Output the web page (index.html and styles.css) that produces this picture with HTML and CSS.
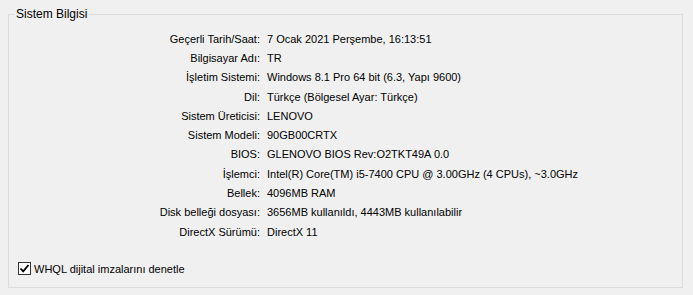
FILE: index.html
```html
<!DOCTYPE html>
<html lang="tr">
<head>
    <meta charset="UTF-8">
    <meta name="viewport" content="width=device-width, initial-scale=1.0">
    <title>Sistem Bilgisi</title>
    <link rel="stylesheet" href="styles.css">
</head>
<body>
    <fieldset class="grup">
        <legend>Sistem Bilgisi</legend>
        <div class="bilgiler">
            <span class="etiket">Geçerli Tarih/Saat:</span><span class="deger">7 Ocak 2021 Perşembe, 16:13:51</span>
            <span class="etiket">Bilgisayar Adı:</span><span class="deger">TR</span>
            <span class="etiket">İşletim Sistemi:</span><span class="deger">Windows 8.1 Pro 64 bit (6.3, Yapı 9600)</span>
            <span class="etiket">Dil:</span><span class="deger">Türkçe (Bölgesel Ayar: Türkçe)</span>
            <span class="etiket">Sistem Üreticisi:</span><span class="deger">LENOVO</span>
            <span class="etiket">Sistem Modeli:</span><span class="deger">90GB00CRTX</span>
            <span class="etiket">BIOS:</span><span class="deger">GLENOVO BIOS Rev:O2TKT49A 0.0</span>
            <span class="etiket">İşlemci:</span><span class="deger">Intel(R) Core(TM) i5-7400 CPU @ 3.00GHz (4 CPUs), ~3.0GHz</span>
            <span class="etiket">Bellek:</span><span class="deger">4096MB RAM</span>
            <span class="etiket">Disk belleği dosyası:</span><span class="deger">3656MB kullanıldı, 4443MB kullanılabilir</span>
            <span class="etiket">DirectX Sürümü:</span><span class="deger">DirectX 11</span>
        </div>
        <label class="secim">
            <span class="kutu">
                <svg width="11" height="11" viewBox="0 0 11 11"><path d="M1.5 5.5 L4.2 8.3 L9.5 2" fill="none" stroke="#000" stroke-width="1.8"/></svg>
            </span>
            WHQL dijital imzalarını denetle
        </label>
    </fieldset>
</body>
</html>
```

FILE: styles.css
```css
body{
    margin: 0;
    background: #f0f0f0;
    font-family: "Liberation Sans", Arial, sans-serif;
    font-size: 11px;
    color: #000;
}
.grup{
    margin: 6px 0 0 8px;
    width: 675px;
    height: 282px;
    box-sizing: border-box;
    border: 1px solid #dcdcdc;
    padding: 7px 0 0 0;
}
.grup legend{
    margin-left: 5px;
    padding: 0 2px;
    line-height: 16px;
    font-size: 12px;
}
.bilgiler{
    display: grid;
    grid-template-columns: 251px auto;
    column-gap: 7px;
    grid-auto-rows: 19.3px;
    align-items: center;
}
.etiket{
    text-align: right;
}
.secim{
    display: flex;
    align-items: center;
    gap: 3px;
    margin: 21px 0 0 9px;
}
.kutu{
    width: 11px;
    height: 11px;
    border: 1px solid #333;
    background: #fff;
    display: flex;
}
```
